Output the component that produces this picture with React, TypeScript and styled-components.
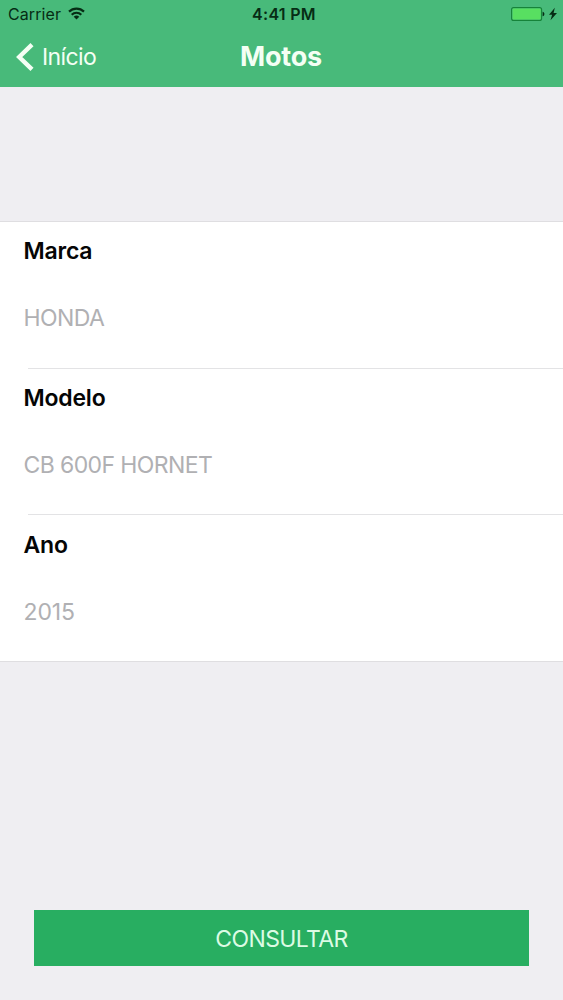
import React from 'react';
import styled, { createGlobalStyle } from 'styled-components';

const GlobalStyle = createGlobalStyle`
  * { box-sizing: border-box; }
  body {
    margin: 0;
    background: #efeef2;
    font-family: Inter, "Liberation Sans", sans-serif;
    font-optical-sizing: none;
  }
`;

const Screen = styled.div`
  display: flex;
  flex-direction: column;
  height: 1000px;
  background: #efeef2;
`;

const Header = styled.header`
  height: 87px;
  background: #48ba7a;
`;

const StatusBar = styled.div`
  display: grid;
  grid-template-columns: 1fr auto 1fr;
  align-items: center;
  height: 29px;
  padding: 0 6px 0 8px;
  font-size: 16px;
  line-height: 29px;
  color: #062c14;
`;

const Carrier = styled.div`
  display: flex;
  align-items: center;
  gap: 7px;
  letter-spacing: 0.1px;
`;

const WifiSlot = styled.span`
  display: flex;
  margin: -1px 0 1px;
`;

const Clock = styled.div`
  padding-left: 3px;
  font-weight: 600;
  letter-spacing: 0.3px;
`;

const Power = styled.div`
  display: flex;
  align-items: center;
  justify-content: flex-end;
  gap: 4px;
  padding-bottom: 1px;
`;

const NavBar = styled.nav`
  display: grid;
  grid-template-columns: 1fr auto 1fr;
  align-items: center;
  height: 58px;
  padding: 0 17px 2px 16px;
  color: #f4fff4;
`;

const BackButton = styled.button`
  display: flex;
  align-items: center;
  gap: 8px;
  padding: 0;
  border: 0;
  background: none;
  color: inherit;
  font: 400 23px/30px Inter, "Liberation Sans", sans-serif;
  letter-spacing: -0.6px;
`;

const Title = styled.h1`
  margin: 0;
  padding-bottom: 1px;
  font-size: 27px;
  font-weight: 700;
  line-height: 32px;
  letter-spacing: -0.2px;
`;

const Form = styled.main`
  margin-top: 134px;
  border-top: 1px solid #dfdee1;
  border-bottom: 1px solid #dfdee1;
  background: #fff;
`;

const Field = styled.section<{ $first?: boolean; $last?: boolean }>`
  height: ${({ $first }) => ($first ? 147 : 146)}px;
  padding: ${({ $last }) => ($last ? 15 : 14)}px 0 0 23.5px;
`;

const Separator = styled.hr`
  height: 1px;
  margin: -1px 0 0 28px;
  border: 0;
  background: #e3e3e5;
`;

const Label = styled.h2`
  margin: 0;
  font-size: 23px;
  font-weight: 600;
  line-height: 30px;
  letter-spacing: -0.2px;
  color: #050505;
`;

const Value = styled.div<{ $numeric?: boolean }>`
  margin-top: 37px;
  font-size: 23px;
  font-weight: 400;
  line-height: 30px;
  letter-spacing: ${({ $numeric }) => ($numeric ? -0.1 : -0.6)}px;
  color: #b0b0b3;
`;

const SubmitButton = styled.button`
  height: 56px;
  margin: auto 34px 34px;
  padding: 2px 0 0;
  border: 0;
  background: #28ae61;
  color: #dcfbe4;
  font: 400 23px/54px Inter, "Liberation Sans", sans-serif;
  letter-spacing: -0.6px;
`;

const fields = [
  { label: 'Marca', value: 'HONDA' },
  { label: 'Modelo', value: 'CB 600F HORNET' },
  { label: 'Ano', value: '2015', numeric: true },
];

const WifiIcon = () => (
  <svg width="17" height="13" viewBox="0 0 17 13" fill="none" stroke="currentColor" strokeWidth="2.2">
    <path d="M1 4.6a10.8 10.8 0 0 1 15 0" />
    <path d="M3.7 7.7a6.9 6.9 0 0 1 9.6 0" />
    <path d="M8.5 12.6 5.7 9.8a4 4 0 0 1 5.6 0z" fill="currentColor" stroke="none" />
  </svg>
);

const BatteryIcon = () => (
  <svg width="34" height="14" viewBox="0 0 34 14">
    <rect x="0.6" y="0.6" width="30" height="12.8" rx="2" fill="#48ba7a" stroke="#16833a" strokeWidth="1.1" />
    <rect x="1.6" y="1.6" width="28" height="10.8" rx="1" fill="#58df61" />
    <path d="M31.6 4.7c2.4.6 2.4 4 0 4.6z" fill="#062c14" />
  </svg>
);

const BoltIcon = () => (
  <svg width="8" height="14" viewBox="0 0 8 14">
    <path d="M5.8.8 0 7.7h3.1L1.5 13.2 8 5.9H4.6z" fill="#062c14" />
  </svg>
);

const ChevronIcon = () => (
  <svg width="18" height="28" viewBox="0 0 18 28" fill="none" stroke="currentColor" strokeWidth="4.4">
    <path d="M16 1.6 3.2 14 16 26.4" />
  </svg>
);

export default function App() {
  return (
    <Screen>
      <GlobalStyle />
      <Header>
        <StatusBar>
          <Carrier>
            Carrier
            <WifiSlot>
              <WifiIcon />
            </WifiSlot>
          </Carrier>
          <Clock>4:41 PM</Clock>
          <Power>
            <BatteryIcon />
            <BoltIcon />
          </Power>
        </StatusBar>
        <NavBar>
          <BackButton>
            <ChevronIcon />
            Início
          </BackButton>
          <Title>Motos</Title>
        </NavBar>
      </Header>
      <Form>
        {fields.map((field, index) => (
          <React.Fragment key={field.label}>
            {index > 0 && <Separator />}
            <Field $first={index === 0} $last={index === fields.length - 1}>
              <Label>{field.label}</Label>
              <Value $numeric={field.numeric}>{field.value}</Value>
            </Field>
          </React.Fragment>
        ))}
      </Form>
      <SubmitButton>CONSULTAR</SubmitButton>
    </Screen>
  );
}
